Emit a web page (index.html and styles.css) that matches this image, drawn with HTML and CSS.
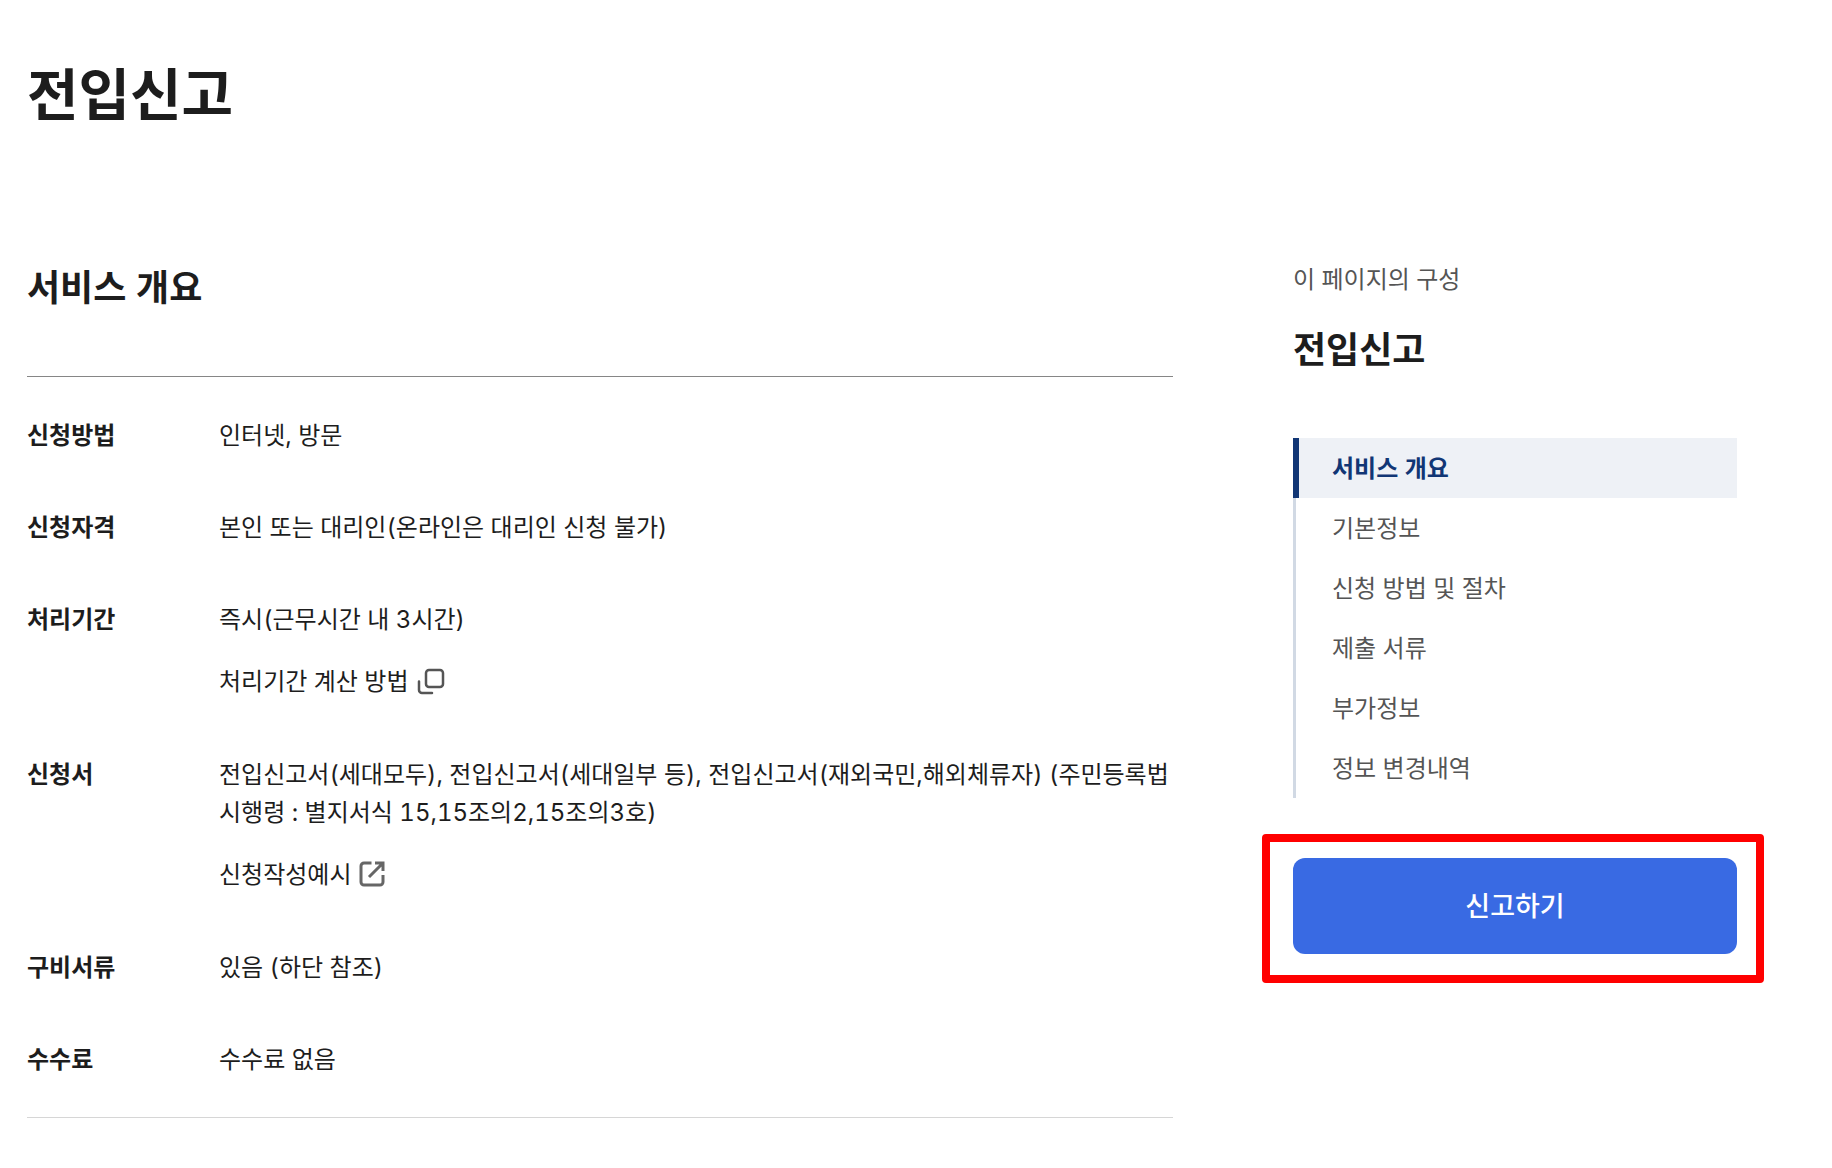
FILE: index.html
```html
<!DOCTYPE html>
<html lang="ko">
<head>
    <meta charset="UTF-8">
    <meta name="viewport" content="width=device-width, initial-scale=1.0">
    <title>전입신고</title>
    <link rel="stylesheet" href="styles.css">
</head>
<body>
    <h1>전입신고</h1>

    <div class="container">
        <main class="content" id="overview">
            <h2>서비스 개요</h2>
            <dl class="info-list">
                <div class="info-row">
                    <dt>신청방법</dt>
                    <dd><p>인터넷, 방문</p></dd>
                </div>
                <div class="info-row">
                    <dt>신청자격</dt>
                    <dd><p>본인 또는 대리인(온라인은 대리인 신청 불가)</p></dd>
                </div>
                <div class="info-row">
                    <dt>처리기간</dt>
                    <dd>
                        <p>즉시(근무시간 내 3시간)</p>
                        <a class="info-link" href="#period">처리기간 계산 방법
                            <svg class="icon" viewBox="0 0 28 28" aria-hidden="true">
                                <rect x="9" y="2" width="17" height="17" rx="3"/>
                                <path d="M2 13.500V22a3 3 0 0 0 3 3h10"/>
                            </svg>
                        </a>
                    </dd>
                </div>
                <div class="info-row">
                    <dt>신청서</dt>
                    <dd>
                        <p>전입신고서(세대모두), 전입신고서(세대일부 등), 전입신고서(재외국민,해외체류자) (주민등록법 시행령 : 별지서식 15,15조의2,15조의3호)</p>
                        <a class="info-link" href="#example">신청작성예시
                            <svg class="icon icon-square" viewBox="0 0 28 28" aria-hidden="true">
                                <path d="M12.500 2H5a3 3 0 0 0-3 3v16a3 3 0 0 0 3 3h16a3 3 0 0 0 3-3v-7M16 2h8v8M24 2L10 16"/>
                            </svg>
                        </a>
                    </dd>
                </div>
                <div class="info-row">
                    <dt>구비서류</dt>
                    <dd><p>있음 (하단 참조)</p></dd>
                </div>
                <div class="info-row">
                    <dt>수수료</dt>
                    <dd><p>수수료 없음</p></dd>
                </div>
            </dl>
        </main>

        <aside class="sidebar">
            <p class="sidebar-label">이 페이지의 구성</p>
            <h2>전입신고</h2>
            <nav class="page-nav">
                <a class="active" href="#overview">서비스 개요</a>
                <a href="#basic">기본정보</a>
                <a href="#method">신청 방법 및 절차</a>
                <a href="#documents">제출 서류</a>
                <a href="#extra">부가정보</a>
                <a href="#history">정보 변경내역</a>
            </nav>
            <div class="action">
                <button type="button">신고하기</button>
            </div>
        </aside>
    </div>
</body>
</html>
```
FILE: styles.css
```css
/* General Styles */
* {
    box-sizing: border-box;
}

body {
    font-family: Inter, 'Noto Sans CJK KR', sans-serif;
    font-size: 24px;
    font-variant-numeric: tabular-nums;
    line-height: 38px;
    color: #1d1d1d;
    background-color: #ffffff;
    margin: 0;
    padding: 53px 95px 50px 27px;
}

h1, h2, p, dl, dd {
    margin: 0;
}

h1 {
    font-size: 56px;
    line-height: 84px;
}

h2 {
    font-size: 36px;
    line-height: 54px;
}

a {
    color: inherit;
    text-decoration: none;
}

.container {
    display: flex;
    align-items: flex-start;
    gap: 120px;
    margin-top: 124px;
}

/* Service Overview */
.content {
    flex: 1;
}

.info-list {
    margin-top: 61px;
    padding: 12px 0;
    border-top: 1px solid #868686;
    border-bottom: 1px solid #d6d6d6;
}

.info-row {
    display: flex;
    padding: 28px 0 26px;
}

.info-row dt {
    flex: 0 0 192px;
    font-weight: bold;
}

.info-row dd {
    flex: 1;
    word-break: keep-all;
}

.info-link {
    display: flex;
    align-items: center;
    gap: 8px;
    margin-top: 24px;
    margin-bottom: 1px;
}

.icon {
    width: 28px;
    height: 28px;
    fill: none;
    stroke: #555555;
    stroke-width: 2.500;
    stroke-linecap: round;
    stroke-linejoin: round;
}

.icon-square {
    stroke: #666666;
    stroke-width: 3;
    stroke-linecap: butt;
    stroke-linejoin: miter;
}

/* Sidebar */
.sidebar {
    flex: 0 0 444px;
}

.sidebar-label {
    color: #555555;
    margin-bottom: 24px;
}

.page-nav {
    margin-top: 61px;
    background: linear-gradient(#d1d9e4, #d1d9e4) left / 3px 100% no-repeat;
}

.page-nav a {
    display: block;
    padding: 12px 33px 10px 39px;
    color: #555555;
}

.page-nav a.active {
    padding-left: 33px;
    border-left: 6px solid #113675;
    background-color: #eef1f6;
    color: #113675;
    font-weight: bold;
}

/* Action Button */
.action {
    position: relative;
    margin-top: 60px;
}

.action::before {
    content: '';
    position: absolute;
    inset: -24px -27px -29px -31px;
    border: 8px solid #ff0000;
    border-radius: 4px;
    pointer-events: none;
}

button {
    display: block;
    width: 100%;
    padding: 30px 28px 28px;
    background-color: #396ae3;
    color: #ffffff;
    border: none;
    border-radius: 12px;
    font-family: inherit;
    font-size: 27px;
    font-weight: 500;
    line-height: 38px;
    cursor: pointer;
}
```
